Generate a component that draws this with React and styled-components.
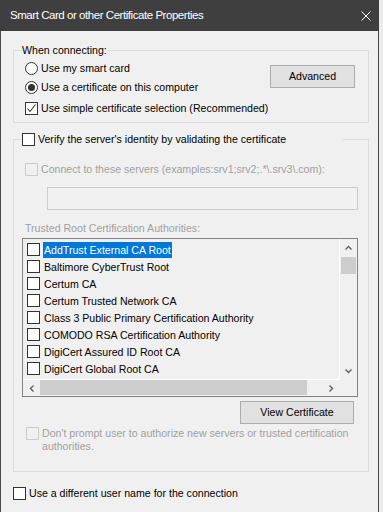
import React from "react";
import styled, { createGlobalStyle } from "styled-components";

const GlobalStyle = createGlobalStyle`
  * {
    box-sizing: border-box;
  }
  html,
  body {
    margin: 0;
    padding: 0;
    background: #ececec;
  }
  body {
    font-family: "Liberation Sans", Arial, sans-serif;
    font-size: 10.6px;
    line-height: 13px;
    color: #000;
  }
`;

const Window = styled.div`
  width: 379px;
  height: 512px;
  overflow: hidden;
  display: flex;
  flex-direction: column;
`;

const TitleBar = styled.div`
  height: 31px;
  flex: none;
  background: #3f3f3f;
  color: #ffffff;
  display: flex;
  align-items: center;
  padding: 0 8px 0 10px;
  font-size: 11.5px;
  letter-spacing: -0.45px;
`;

const CloseButton = styled.span`
  margin-left: auto;
  width: 10px;
  height: 10px;
  display: flex;
`;

const Body = styled.div`
  flex: 1;
  background: #f0f0f0;
  border-left: 1px solid #4a4a4a;
  border-right: 1px solid #4a4a4a;
  padding: 0 9px 0 12px;
  display: flex;
  flex-direction: column;
`;

const GroupBox = styled.fieldset`
  margin: ${(p) => p.$top}px 0 0 0;
  min-width: 0;
  border: 1px solid #dcdcdc;
  padding: ${(p) => p.$padTop}px 10px ${(p) => p.$padBottom}px 8px;
  display: flex;
  flex-direction: column;
`;

const Legend = styled.legend`
  padding: 0;
  height: 14px;
  line-height: 14px;
  width: ${(p) => (p.$width ? `${p.$width}px` : "auto")};
  display: flex;
  align-items: center;
  gap: 3px;
  white-space: nowrap;
`;

const ConnectGrid = styled.div`
  display: grid;
  grid-template-columns: 1fr auto;
`;

const Options = styled.div`
  display: flex;
  flex-direction: column;
  min-width: 0;
`;

const Row = styled.label`
  display: flex;
  align-items: ${(p) => (p.$wrap ? "flex-start" : "center")};
  gap: ${(p) => p.$gap ?? 3}px;
  min-height: ${(p) => (p.$wrap ? "auto" : "19px")};
  margin-top: ${(p) => p.$top ?? 0}px;
  padding-left: ${(p) => p.$indent ?? 0}px;
  white-space: ${(p) => (p.$wrap ? "normal" : "nowrap")};
  color: ${(p) => (p.$disabled ? "#a0a0a0" : "#000")};
`;

const Box = styled.span`
  width: 13px;
  height: 13px;
  flex: none;
  border: 1px solid ${(p) => (p.$disabled ? "#cccccc" : "#333333")};
  background: ${(p) => (p.$disabled ? "#f0f0f0" : "#ffffff")};
  display: inline-flex;
  align-items: center;
  justify-content: center;
`;

const Circle = styled.span`
  width: 13px;
  height: 13px;
  flex: none;
  border-radius: 50%;
  border: 1px solid #333333;
  background: #ffffff;
  display: inline-flex;
  align-items: center;
  justify-content: center;
`;

const Dot = styled.span`
  width: 7px;
  height: 7px;
  border-radius: 50%;
  background: #333333;
`;

const Button = styled.button`
  font: inherit;
  color: #000;
  height: 23px;
  width: ${(p) => p.$width}px;
  padding: 0;
  background: #e1e1e1;
  border: 1px solid #adadad;
  margin: ${(p) => p.$margin};
  align-self: ${(p) => p.$align || "auto"};
`;

const TextField = styled.div`
  height: 23px;
  margin: 8px 0 0 25px;
  border: 1px solid #cccccc;
  background: #f0f0f0;
`;

const Caption = styled.div`
  margin: 12px 0 0 3px;
  color: #a0a0a0;
`;

const ListBox = styled.div`
  margin-top: 3px;
  height: 159px;
  border: 1px solid #828282;
  background: #f0f0f0;
  display: grid;
  grid-template-columns: 1fr 18px;
  grid-template-rows: 1fr 17px;
`;

const Items = styled.div`
  padding-top: 2px;
  overflow: hidden;
`;

const Item = styled.div`
  height: 17px;
  display: flex;
  align-items: center;
  gap: 3px;
  padding-left: 4px;
`;

const ItemText = styled.span`
  height: 16px;
  line-height: 16px;
  padding: 0 1px;
  white-space: nowrap;
  background: ${(p) => (p.$selected ? "#0078d7" : "transparent")};
  color: ${(p) => (p.$selected ? "#ffffff" : "#000")};
`;

const VScroll = styled.div`
  border-left: 1px solid #ffffff;
  display: flex;
  flex-direction: column;
`;

const HScroll = styled.div`
  border-top: 1px solid #ffffff;
  display: flex;
`;

const Corner = styled.div`
  background: #f0f0f0;
`;

const Arrow = styled.span`
  flex: none;
  width: ${(p) => (p.$vertical ? "auto" : "17px")};
  height: ${(p) => (p.$vertical ? "17px" : "auto")};
  display: flex;
  align-items: center;
  justify-content: center;
`;

const Thumb = styled.span`
  flex: none;
  background: #cdcdcd;
  margin: ${(p) => (p.$vertical ? "1px 1px 0 1px" : "0 0 1px 0")};
  width: ${(p) => (p.$vertical ? "auto" : `${p.$size}px`)};
  height: ${(p) => (p.$vertical ? `${p.$size}px` : "auto")};
`;

const Track = styled.span`
  flex: 1;
`;

const Chevron = ({ dir }) => {
  const points = {
    up: "0.5,4.5 3.5,1.5 6.5,4.5",
    down: "0.5,1.5 3.5,4.5 6.5,1.5",
    left: "4.5,0.5 1.5,3.5 4.5,6.5",
    right: "1.5,0.5 4.5,3.5 1.5,6.5"
  }[dir];
  const vertical = dir === "up" || dir === "down";
  return (
    <svg width={vertical ? 7 : 6} height={vertical ? 6 : 7} viewBox={vertical ? "0 0 7 6" : "0 0 6 7"}>
      <polyline points={points} fill="none" stroke="#606060" strokeWidth="1.4" />
    </svg>
  );
};

const CheckBox = ({ checked, disabled }) => (
  <Box $disabled={disabled}>
    {checked && (
      <svg width="11" height="11" viewBox="0 0 11 11">
        <polyline points="1.5,5.5 4,8.5 9.5,1.5" fill="none" stroke="#333333" strokeWidth="1.1" />
      </svg>
    )}
  </Box>
);

const Radio = ({ checked }) => <Circle>{checked && <Dot />}</Circle>;

const authorities = [
  "AddTrust External CA Root",
  "Baltimore CyberTrust Root",
  "Certum CA",
  "Certum Trusted Network CA",
  "Class 3 Public Primary Certification Authority",
  "COMODO RSA Certification Authority",
  "DigiCert Assured ID Root CA",
  "DigiCert Global Root CA"
];

const App = () => {
  return (
    <>
      <GlobalStyle />
      <Window>
        <TitleBar>
          Smart Card or other Certificate Properties
          <CloseButton>
            <svg width="10" height="10" viewBox="0 0 10 10">
              <path d="M0.5 0.5 L9.5 9.5 M9.5 0.5 L0.5 9.5" stroke="#ffffff" strokeWidth="1" />
            </svg>
          </CloseButton>
        </TitleBar>
        <Body>
          <GroupBox $top={12} $padTop={2} $padBottom={4}>
            <Legend>When connecting:</Legend>
            <ConnectGrid>
              <Options>
                <Row $indent={3}>
                  <Radio />
                  Use my smart card
                </Row>
                <Row $indent={3}>
                  <Radio checked />
                  Use a certificate on this computer
                </Row>
                <Row $indent={3} $top={2}>
                  <CheckBox checked />
                  Use simple certificate selection (Recommended)
                </Row>
              </Options>
              <Button $width={85} $margin="6px 3px 0 0" $align="start">
                Advanced
              </Button>
            </ConnectGrid>
          </GroupBox>

          <GroupBox $top={9} $padTop={0} $padBottom={18}>
            <Legend $width={321}>
              <CheckBox />
              Verify the server's identity by validating the certificate
            </Legend>
            <Row $indent={3} $top={14} $disabled>
              <CheckBox disabled />
              Connect to these servers (examples:srv1;srv2;.*\.srv3\.com):
            </Row>
            <TextField />
            <Caption>Trusted Root Certification Authorities:</Caption>
            <ListBox>
              <Items>
                {authorities.map((name, i) => (
                  <Item key={name}>
                    <CheckBox />
                    <ItemText $selected={i === 0}>{name}</ItemText>
                  </Item>
                ))}
              </Items>
              <VScroll>
                <Arrow $vertical>
                  <Chevron dir="up" />
                </Arrow>
                <Thumb $vertical $size={17} />
                <Track />
                <Arrow $vertical>
                  <Chevron dir="down" />
                </Arrow>
              </VScroll>
              <HScroll>
                <Arrow>
                  <Chevron dir="left" />
                </Arrow>
                <Thumb $size={267} />
                <Track />
                <Arrow>
                  <Chevron dir="right" />
                </Arrow>
              </HScroll>
              <Corner />
            </ListBox>
            <Button $width={114} $margin="4px 4px 0 0" $align="flex-end">
              View Certificate
            </Button>
            <Row $indent={4} $top={3} $wrap $disabled>
              <CheckBox disabled />
              <span>Don't prompt user to authorize new servers or trusted certification authorities.</span>
            </Row>
          </GroupBox>

          <Row $top={12}>
            <CheckBox />
            Use a different user name for the connection
          </Row>
        </Body>
      </Window>
    </>
  );
};

export default App;
